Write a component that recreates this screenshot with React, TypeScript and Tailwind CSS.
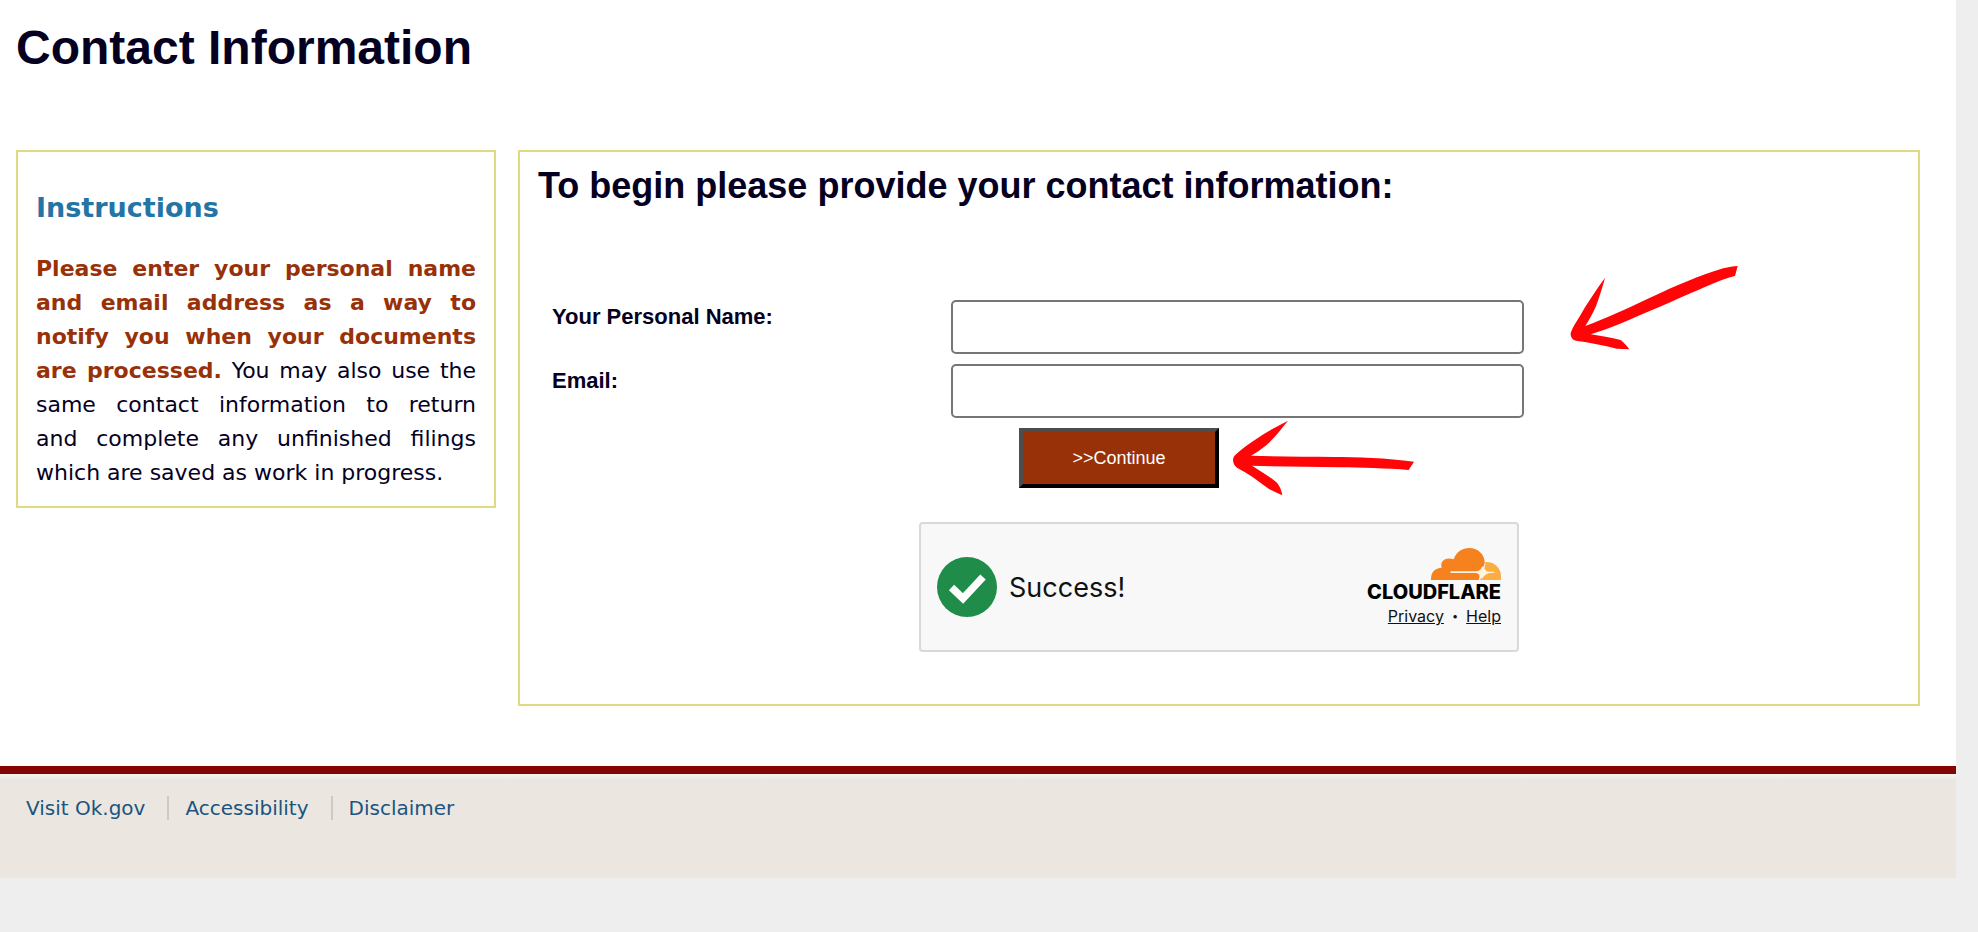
import { useState } from "react";

const footerLinks = [
  { label: "Visit Ok.gov", href: "#ok-gov" },
  { label: "Accessibility", href: "#accessibility" },
  { label: "Disclaimer", href: "#disclaimer" },
];

function NameArrow() {
  return (
    <svg
      viewBox="90 76 504 258"
      className="absolute -top-[35px] left-full ml-[46px] h-[86px] w-[168px]"
      fill="#ff0508"
      aria-hidden="true"
    >
      <path d="M593 79 L585 109 C545 119 515 133 480 149 C400 183 310 224 240 252 C210 264 180 275 152 284 C182 289 212 293 242 301 C252 309 261 319 268 329 L230 327 C190 317 150 308 108 303 C96 301 91 290 92 280 C98 262 108 248 118 232 C140 192 168 152 195 114 C188 142 178 172 168 200 C158 222 148 240 136 259 C200 235 260 207 330 174 C410 138 480 106 550 86 C566 82 580 80 593 79 Z" />
    </svg>
  );
}

function ContinueArrow() {
  return (
    <svg
      viewBox="96 60 549 228"
      className="absolute -top-2 left-full ml-[13px] h-[76px] w-[183px]"
      fill="#ff0508"
      aria-hidden="true"
    >
      <path d="M264 62 C240 92 218 120 197 137 C182 149 168 158 153 167 C230 170 320 170 400 171 C470 171 560 174 642 185 L626 210 C560 205 480 203 420 202 C330 200 240 200 156 197 C182 214 210 230 231 248 C239 258 245 272 247 286 C234 280 220 274 207 267 C175 243 145 221 112 204 C98 194 95 176 105 166 C124 147 148 130 170 116 C200 96 232 78 264 62 Z" />
    </svg>
  );
}

function SuccessIcon() {
  return (
    <svg viewBox="0 0 60 60" className="h-15 w-15" aria-hidden="true">
      <circle cx="30" cy="30" r="30" fill="#1f8c49" />
      <path d="M14.5 30.5 L26 41.5 L46 20" fill="none" stroke="#fff" strokeWidth="7.5" />
    </svg>
  );
}

function CloudIcon() {
  return (
    <svg viewBox="0 0 210 96" className="h-8 w-[70px]" aria-hidden="true">
      <path
        fill="#f6821f"
        d="M0 96 C-1 74 11 60 32 59 C26 42 42 24 68 34 C76 12 92 0 115 0 C143 0 162 22 161 44 C160 52 156 60 150 66 L142 74 C146 80 147 88 143 96 Z"
      />
      <path
        fill="#fbad41"
        d="M163 42 C190 40 210 60 210 84 L210 96 L147 96 C150 90 153 84 157 79 L168 72 L160 62 C162 56 163 50 163 42 Z"
      />
      <path
        fill="#fff3e2"
        d="M60 70 L136 70 C146 68 150 64 154 54 C158 64 163 69 173 71 L190 71 L190 74 L173 76 C163 79 158 84 153 94 C150 84 146 78 136 75 L60 75 C57 74 57 71 60 70 Z"
      />
    </svg>
  );
}

function Turnstile() {
  return (
    <div className="mx-auto mt-[34px] flex h-[130px] w-[600px] items-center justify-between rounded-sm border-2 border-[#d9d9d9] bg-[#f8f8f8] px-4 font-[Inter,sans-serif] text-[#111111]">
      <div className="flex items-center gap-3">
        <SuccessIcon />
        <span className="pt-[2px] text-[27px] leading-8">Success!</span>
      </div>
      <div className="flex flex-col items-end pt-[2px]">
        <CloudIcon />
        <span className="mt-1 text-[20px] leading-4 font-extrabold text-black">CLOUDFLARE</span>
        <div className="mt-1 flex gap-2 text-[16px] leading-6">
          <a href="#privacy" className="underline">
            Privacy
          </a>
          <span className="text-[11px]">•</span>
          <a href="#help" className="underline">
            Help
          </a>
        </div>
      </div>
    </div>
  );
}

export default function App() {
  const [name, setName] = useState("");
  const [email, setEmail] = useState("");

  return (
    <div className="min-h-screen bg-[#eeeeee] pr-[22px] font-['Liberation_Sans',Arial,sans-serif] text-[#05001f]">
      <div className="bg-white">
        <main className="pt-5 pr-9 pb-15 pl-4">
          <h1 className="mb-[74px] text-[48px] leading-[56px] font-bold">Contact Information</h1>

          <div className="flex items-start gap-[22px]">
            {/* Instructions */}
            <aside className="w-[480px] shrink-0 border-2 border-[#dedb80] px-[18px] pt-[38px] pb-4 font-['DejaVu_Sans',Verdana,sans-serif]">
              <h2 className="mb-[26px] text-[27px] leading-9 font-bold text-[#2474a4]">Instructions</h2>
              <p className="text-justify text-[22px] leading-[34px]">
                <strong className="font-bold text-[#993108]">
                  Please enter your personal name and email address as a way to notify you when your
                  documents are processed.
                </strong>{" "}
                You may also use the same contact information to return and&nbsp;complete any
                unfinished filings which are saved as work in progress.
              </p>
            </aside>

            {/* Contact form */}
            <section className="min-w-0 flex-1 border-2 border-[#dedb80] px-[18px] pt-[14px] pb-[52px]">
              <h2 className="mb-[94px] text-[36px] leading-10 font-bold">
                To begin please provide your contact information:
              </h2>

              <form onSubmit={(e) => e.preventDefault()}>
                <div className="grid grid-cols-[399px_573px] gap-y-[10px] pl-[14px]">
                  <label htmlFor="name" className="pt-[3px] text-[22px] leading-7 font-bold">
                    Your Personal Name:
                  </label>
                  <div className="relative">
                    <input
                      id="name"
                      type="text"
                      value={name}
                      onChange={(e) => setName(e.target.value)}
                      className="block h-[54px] w-full rounded-[5px] border-2 border-[#767676] bg-white px-3 text-[22px]"
                    />
                    <NameArrow />
                  </div>
                  <label htmlFor="email" className="pt-[3px] text-[22px] leading-7 font-bold">
                    Email:
                  </label>
                  <input
                    id="email"
                    type="email"
                    value={email}
                    onChange={(e) => setEmail(e.target.value)}
                    className="block h-[54px] w-full rounded-[5px] border-2 border-[#767676] bg-white px-3 text-[22px]"
                  />
                </div>

                <div className="mt-[10px] flex w-1/2 justify-end">
                  <div className="relative">
                    <button
                      type="submit"
                      className="block h-[60px] w-[200px] border-4 border-t-[#4d4d4d] border-r-black border-b-black border-l-[#4d4d4d] bg-[#993108] text-[18px] text-white"
                    >
                      &gt;&gt;Continue
                    </button>
                    <ContinueArrow />
                  </div>
                </div>

                <Turnstile />
              </form>
            </section>
          </div>
        </main>

        {/* Footer */}
        <footer className="border-t-8 border-[#850505] bg-[#ebe7e0] bg-linear-to-b from-[#f7f5f2] to-[#ebe7e0] to-[6px] pt-[22px] pb-[58px] pl-[26px]">
          <ul className="flex font-['DejaVu_Sans',Verdana,sans-serif] text-[20px] leading-6 text-[#1b5480]">
            {footerLinks.map((link) => (
              <li
                key={link.label}
                className="mr-4 border-r-2 border-[#cccac7] pr-[22px] last:mr-0 last:border-r-0"
              >
                <a href={link.href}>{link.label}</a>
              </li>
            ))}
          </ul>
        </footer>
      </div>
    </div>
  );
}
